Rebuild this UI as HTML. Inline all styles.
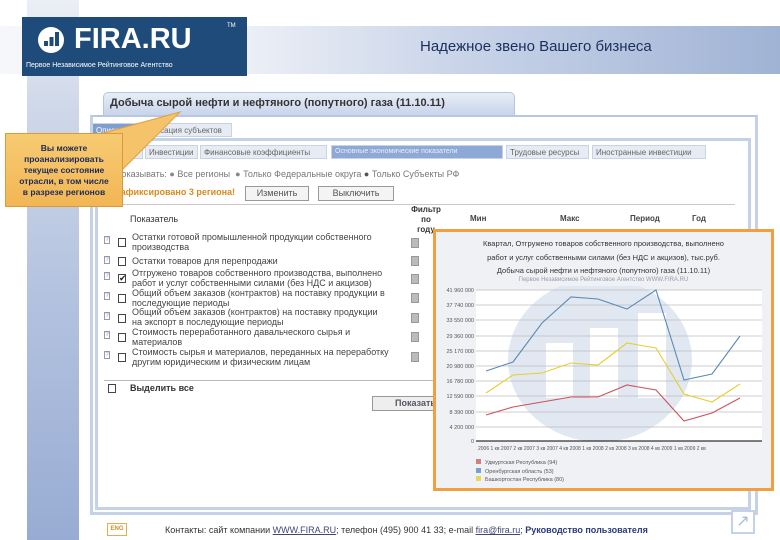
<!DOCTYPE html>
<html><head><meta charset="utf-8"><style>
*{margin:0;padding:0;box-sizing:border-box}
body{width:780px;height:540px;overflow:hidden;background:#fff;font-family:"Liberation Sans","DejaVu Sans",sans-serif;position:relative;color:#222}
.a{position:absolute}
.strip{left:27px;top:0;width:52px;height:540px;background:linear-gradient(#eceff5,#cfd8e9 20%,#b3c2df 55%,#98acd3)}
.logo{left:22px;top:17px;width:225px;height:59px;background:#1f4b7a}
.band{left:0;top:26px;width:780px;height:48px;background:linear-gradient(90deg,#f6f7fa,#eef1f7 30%,#c8d3e8 60%,#a0b3d5)}
.t{font-size:9px;color:#444;white-space:nowrap}
.tab{position:absolute;top:0;height:14px;background:#e6ebf4;border:1px solid #c9d3e6;font-size:8px;color:#666;padding:2px 3px;white-space:nowrap;overflow:hidden}
.cb{position:absolute;width:8px;height:9px;border:1px solid #444;background:#fff}
.q{position:absolute;width:6px;height:8px;border:1px solid #99a;font-size:6px;color:#88a;text-align:center;line-height:7px}
.g{position:absolute;width:8px;height:10px;background:#bbb;border:1px solid #999}
</style></head><body>
<div class="a band"></div>
<div class="a strip"></div>
<div class="a logo">
 <svg class="a" style="left:15px;top:9px" width="28" height="28" viewBox="0 0 28 28"><circle cx="14" cy="14" r="13" fill="#fff"/><rect x="7" y="15" width="4" height="5" fill="#1f4b7a"/><rect x="12.5" y="11" width="4" height="9" fill="#1f4b7a"/><rect x="18" y="6" width="4" height="14" fill="#1f4b7a"/></svg>
 <div class="a" style="left:52px;top:6px;font-size:29px;font-weight:bold;color:#fff">FIRA.RU</div>
 <div class="a" style="left:205px;top:6px;font-size:6px;color:#fff">TM</div>
 <div class="a" style="left:4px;top:45px;font-size:7px;color:#fff;white-space:nowrap">Первое Независимое Рейтинговое Агентство</div>
</div>
<div class="a" style="left:420px;top:38px;font-size:15px;color:#1b2f5c;white-space:nowrap">Надежное звено Вашего бизнеса</div>

<div class="a" style="left:103px;top:92px;width:412px;height:24px;background:linear-gradient(#e9eef7,#c6d3ea);border:1px solid #b7c6e0;border-bottom:none;border-radius:5px 5px 0 0"></div>
<div class="a" style="left:110px;top:97px;font-size:11px;font-weight:bold;color:#333;white-space:nowrap">Добыча сырой нефти и нефтяного (попутного) газа (11.10.11)</div>
<div class="a" style="left:90px;top:115px;width:668px;height:400px;border:3px solid #c5d1e6;border-top:2px solid #b8c6e0;background:#fff"></div>
<div class="a" style="left:92px;top:123px">
 <div class="tab" style="left:0;width:46px;background:#7f9ed0;color:#fff">Описание</div>
 <div class="tab" style="left:50px;width:90px">Фиксация субъектов</div>
</div>
<div class="a" style="left:95px;top:138px;width:656px;height:372px;border:3px solid #c5d1e6;background:#fff"></div>
<div class="a" style="left:97px;top:145px">
 <div class="tab" style="left:0;width:46px">Финансы</div>
 <div class="tab" style="left:48px;width:53px">Инвестиции</div>
 <div class="tab" style="left:103px;width:127px">Финансовые коэффициенты</div>
 <div class="tab" style="left:234px;width:172px;background:#8fa9d6;color:#e8eefa;font-size:7px">Основные экономические показатели</div>
 <div class="tab" style="left:409px;width:83px">Трудовые ресурсы</div>
 <div class="tab" style="left:495px;width:114px">Иностранные инвестиции</div>
</div>
<div class="a t" style="left:115px;top:169px;color:#777">Показывать: <span style="color:#888">●</span> Все регионы &nbsp;<span style="color:#888">●</span> Только Федеральные округа <span style="color:#555">●</span> Только Субъекты РФ</div>
<div class="a t" style="left:115px;top:187px;color:#d98a1a;font-weight:bold">Зафиксировано 3 региона!</div>
<div class="a" style="left:245px;top:186px;width:64px;height:15px;border:1px solid #999;background:#f4f4f4;font-size:9px;color:#555;text-align:center;line-height:13px">Изменить</div>
<div class="a" style="left:318px;top:186px;width:76px;height:15px;border:1px solid #999;background:#f4f4f4;font-size:9px;color:#555;text-align:center;line-height:13px">Выключить</div>
<div class="a" style="left:115px;top:204px;width:620px;height:1px;background:#c8c8c8"></div>
<div class="a t" style="left:130px;top:214px;color:#333">Показатель</div>
<div class="a t" style="left:410px;top:205px;font-size:8px;font-weight:bold;text-align:center;line-height:10px;width:32px;color:#333">Фильтр<br>по<br>году</div>
<div class="a t" style="left:470px;top:214px;font-weight:bold;font-size:8px">Мин</div>
<div class="a t" style="left:560px;top:214px;font-weight:bold;font-size:8px">Макс</div>
<div class="a t" style="left:630px;top:214px;font-weight:bold;font-size:8px">Период</div>
<div class="a t" style="left:692px;top:214px;font-weight:bold;font-size:8px">Год</div>

<div class="a" style="left:0;top:0">
<div class="q" style="left:104px;top:236px">?</div><div class="cb" style="left:118px;top:238px"></div><div class="g" style="left:411px;top:238px"></div>
<div class="a t" style="left:132px;top:232px;line-height:10px;font-size:9px">Остатки готовой промышленной продукции собственного<br>производства</div>
<div class="q" style="left:104px;top:256px">?</div><div class="cb" style="left:118px;top:257px"></div><div class="g" style="left:411px;top:256px"></div>
<div class="a t" style="left:132px;top:256px">Остатки товаров для перепродажи</div>
<div class="q" style="left:104px;top:272px">?</div><div class="cb" style="left:118px;top:274px;font-size:9px;line-height:7px">✔</div><div class="g" style="left:411px;top:274px"></div>
<div class="a t" style="left:132px;top:268px;line-height:10px">Отгружено товаров собственного производства, выполнено<br>работ и услуг собственными силами (без НДС и акцизов)</div>
<div class="q" style="left:104px;top:292px">?</div><div class="cb" style="left:118px;top:294px"></div><div class="g" style="left:411px;top:293px"></div>
<div class="a t" style="left:132px;top:288px;line-height:10px">Общий объем заказов (контрактов) на поставку продукции в<br>последующие периоды</div>
<div class="q" style="left:104px;top:312px">?</div><div class="cb" style="left:118px;top:314px"></div><div class="g" style="left:411px;top:313px"></div>
<div class="a t" style="left:132px;top:307px;line-height:10px">Общий объем заказов (контрактов) на поставку продукции<br>на экспорт в последующие периоды</div>
<div class="q" style="left:104px;top:331px">?</div><div class="cb" style="left:118px;top:333px"></div><div class="g" style="left:411px;top:332px"></div>
<div class="a t" style="left:132px;top:327px;line-height:10px">Стоимость переработанного давальческого сырья и<br>материалов</div>
<div class="q" style="left:104px;top:351px">?</div><div class="cb" style="left:118px;top:353px"></div><div class="g" style="left:411px;top:352px"></div>
<div class="a t" style="left:132px;top:347px;line-height:10px">Стоимость сырья и материалов, переданных на переработку<br>другим юридическим и физическим лицам</div>
</div>
<div class="a" style="left:104px;top:380px;width:630px;height:1px;background:#bbb"></div>
<div class="cb" style="left:108px;top:384px"></div>
<div class="a t" style="left:130px;top:383px;font-weight:bold;color:#333">Выделить все</div>
<div class="a" style="left:372px;top:396px;width:80px;height:15px;border:1px solid #999;background:#eee;font-size:9px;font-weight:bold;color:#556;padding-left:22px;line-height:13px">Показать</div>

<svg class="a" style="left:0;top:100px" width="200" height="120"><polygon points="100,34 180,12 122,70" fill="#f5c36a" stroke="#e0a040" stroke-width="1"/></svg>
<div class="a" style="left:5px;top:133px;width:118px;height:74px;background:linear-gradient(#f7cb72,#f2b654);border:1px solid #d99a3a;font-size:8.5px;font-weight:bold;color:#1a2a5a;text-align:center;line-height:11px;padding-top:9px">Вы можете<br>проанализировать<br>текущее состояние<br>отрасли, в том числе<br>в разрезе регионов</div>

<div class="a" style="left:433px;top:229px;width:341px;height:262px;border:3px solid #f0a040;background:#eff1f5"></div>
<div class="a" style="left:436px;top:237px;width:335px;text-align:center;font-size:7.5px;color:#333;line-height:13.5px">Квартал, Отгружено товаров собственного производства, выполнено<br>работ и услуг собственными силами (без НДС и акцизов), тыс.руб.<br>Добыча сырой нефти и нефтяного (попутного) газа (11.10.11)</div>
<div class="a" style="left:436px;top:277px;width:335px;text-align:center;font-size:6px;color:#99a">Первое Независимое Рейтинговое Агентство WWW.FIRA.RU</div>
<svg class="a" style="left:436px;top:286px" width="335" height="205" font-family="Liberation Sans" font-size="5.5" fill="#555">
<g transform="translate(-436,-286)">
<rect x="476" y="290" width="286" height="151" fill="#fff"/>
<ellipse cx="600" cy="360" rx="92" ry="82" fill="#e1e8f2"/>
<rect x="546" y="343" width="27" height="55" fill="#fff"/><rect x="590" y="328" width="28" height="70" fill="#fff"/><rect x="638" y="313" width="28" height="85" fill="#fff"/>
<g stroke="#bbb" stroke-width="0.7">
<line x1="476" y1="290" x2="762" y2="290"/><line x1="476" y1="305" x2="762" y2="305"/><line x1="476" y1="320" x2="762" y2="320"/><line x1="476" y1="336" x2="762" y2="336"/><line x1="476" y1="351" x2="762" y2="351"/><line x1="476" y1="366" x2="762" y2="366"/><line x1="476" y1="381" x2="762" y2="381"/><line x1="476" y1="396" x2="762" y2="396"/><line x1="476" y1="412" x2="762" y2="412"/><line x1="476" y1="427" x2="762" y2="427"/></g>
<line x1="476" y1="441" x2="762" y2="441" stroke="#000" stroke-width="1"/>
<g text-anchor="end"><text x="474" y="292">41 960 000</text><text x="474" y="307">37 740 000</text><text x="474" y="322">33 550 000</text><text x="474" y="338">29 360 000</text><text x="474" y="353">25 170 000</text><text x="474" y="368">20 980 000</text><text x="474" y="383">16 780 000</text><text x="474" y="398">12 590 000</text><text x="474" y="414">8 390 000</text><text x="474" y="429">4 200 000</text><text x="474" y="443">0</text></g>
<text x="478" y="450" font-size="5">2006 1 кв 2007 2 кв 2007 3 кв 2007 4 кв 2008 1 кв 2008 2 кв 2008 3 кв 2008 4 кв 2009 1 кв 2009 2 кв</text>
<g fill="none" stroke-width="1.1">
<polyline stroke="#5b8ab5" points="486,371 513,362 542,323 571,297 598,299 627,309 656,290 684,380 712,374 740,336"/>
<polyline stroke="#e6cf2c" points="486,393 513,375 542,373 571,363 598,365 627,343 656,348 684,394 712,402 740,384"/>
<polyline stroke="#c9535a" points="486,415 513,407 542,402 571,397 598,397 627,385 656,390 684,421 712,413 740,398"/>
</g>
<rect x="476" y="459" width="5" height="5" fill="#d08080"/><text x="485" y="464">Удмуртская Республика (94)</text>
<rect x="476" y="468" width="5" height="5" fill="#7aa0cc"/><text x="485" y="473">Оренбургская область (53)</text>
<rect x="476" y="476" width="5" height="5" fill="#e8d85a"/><text x="485" y="481">Башкортостан Республика (80)</text>
</g></svg>

<div class="a" style="left:107px;top:523px;width:20px;height:13px;border:1px solid #e0b050;font-size:6px;color:#d09020;font-weight:bold;text-align:center;line-height:11px">ENG</div>
<div class="a t" style="left:165px;top:525px;font-size:9px;color:#333">Контакты: сайт компании <u style="color:#447">WWW.FIRA.RU</u>; телефон (495) 900 41 33; e-mail <u style="color:#447">fira@fira.ru</u>; <b style="color:#2a3a7a">Руководство пользователя</b></div>
<div class="a" style="left:731px;top:510px;width:24px;height:24px;border:2px solid #c5d1e6;background:#fff;color:#aabbd8;font-size:16px;text-align:center;line-height:20px">↗</div>
</body></html>
